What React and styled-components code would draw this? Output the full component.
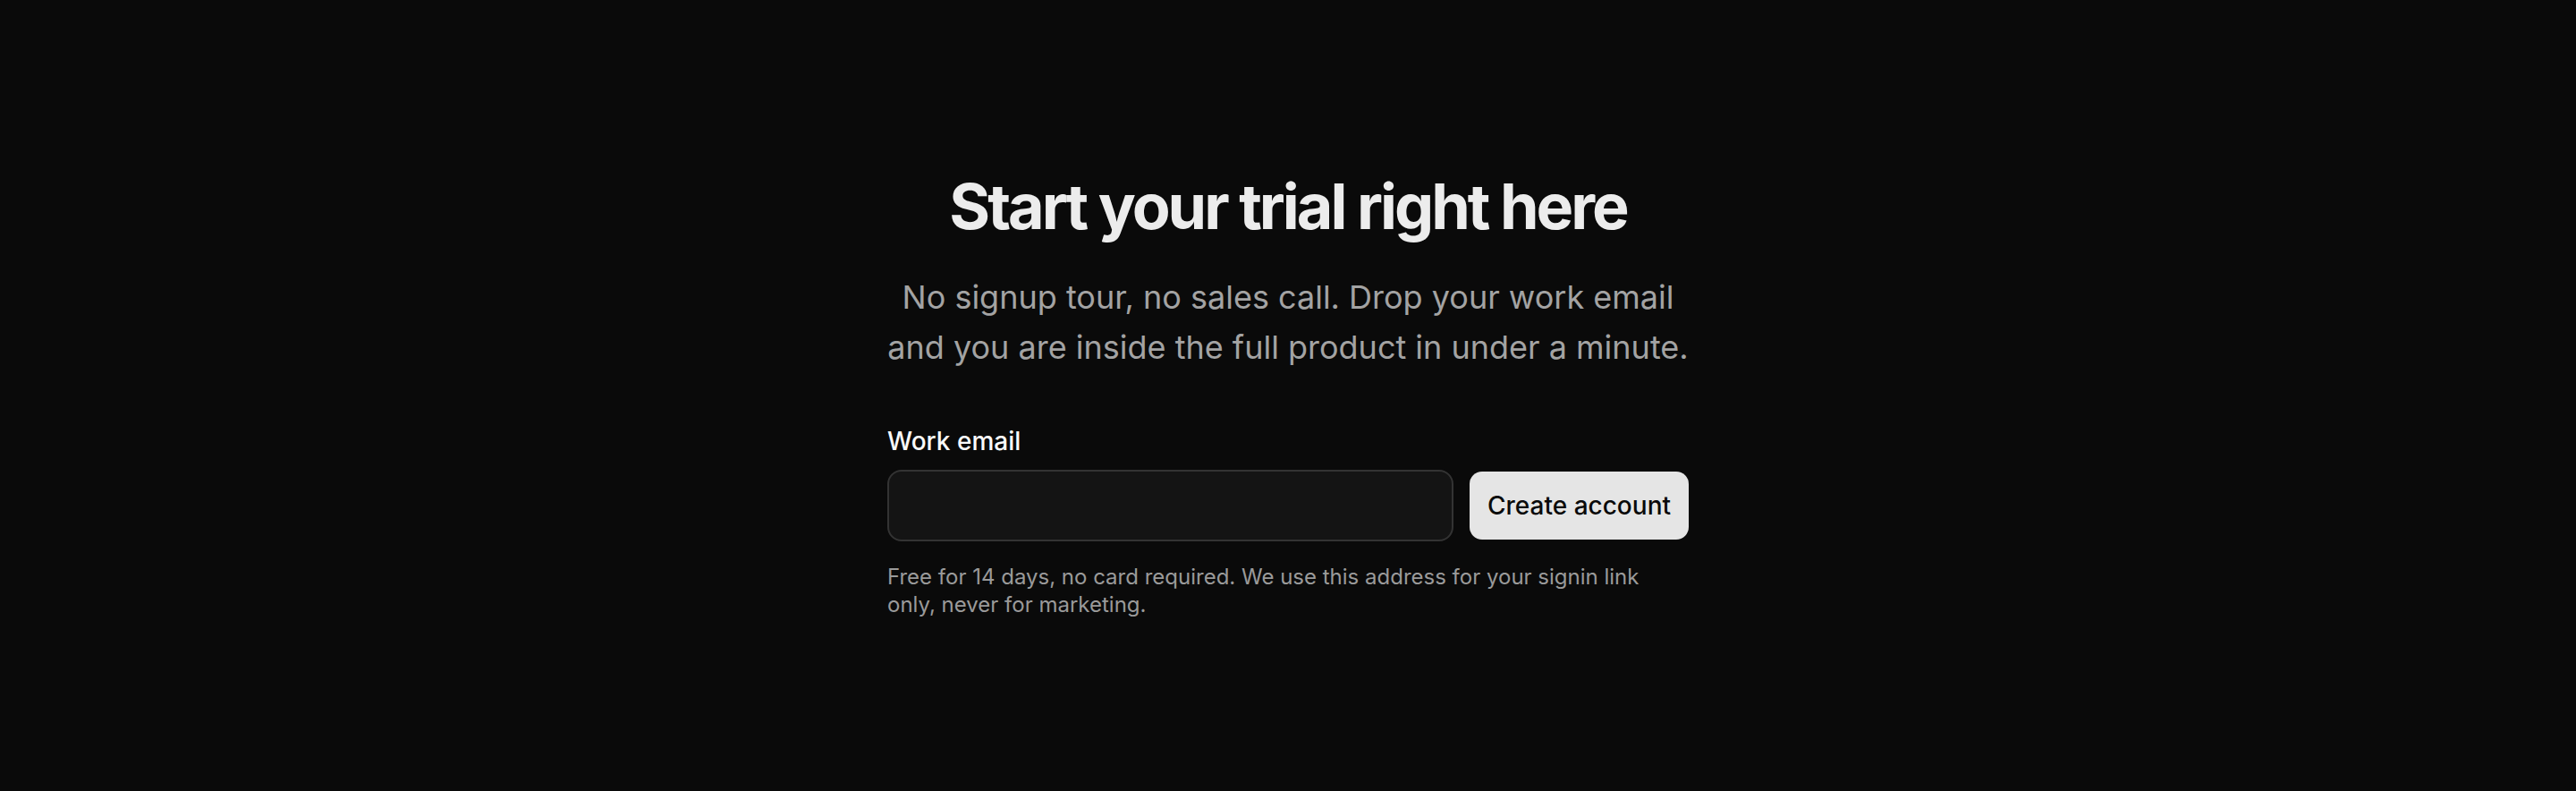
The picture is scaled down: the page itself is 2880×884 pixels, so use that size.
import styled, { createGlobalStyle } from 'styled-components';

const GlobalStyle = createGlobalStyle`
  html, body {
    margin: 0;
    padding: 0;
    background: #0a0a0a;
  }
  body {
    font-family: Inter, "Noto Sans", "Liberation Sans", sans-serif;
  }
  * {
    box-sizing: border-box;
  }
`;

const Page = styled.main`
  min-height: 100vh;
  display: flex;
  align-items: center;
  justify-content: center;
  background: #0a0a0a;
`;

const Column = styled.section`
  width: 896px;
  display: flex;
  flex-direction: column;
`;

const Title = styled.h1`
  margin: 0;
  font-size: 70px;
  line-height: 1.1;
  font-weight: 700;
  letter-spacing: -0.043em;
  color: #ececec;
  text-align: center;
`;

const Lead = styled.p`
  margin: 35px 0 0;
  font-size: 36px;
  line-height: 56px;
  color: #a3a3a3;
  text-align: center;
`;

const Form = styled.form`
  margin-top: 58px;
  display: flex;
  flex-direction: column;
`;

const Label = styled.label`
  font-size: 28px;
  line-height: 1.4;
  font-weight: 500;
  color: #fafafa;
`;

const Row = styled.div`
  margin-top: 11px;
  display: flex;
  align-items: center;
  gap: 18px;
`;

const Input = styled.input`
  flex: 1;
  height: 80px;
  padding: 0 22px;
  border: 2px solid #333333;
  border-radius: 16px;
  background: #141414;
  color: #fafafa;
  font: inherit;
  font-size: 28px;
  outline: none;
`;

const Button = styled.button`
  height: 76px;
  padding: 0 20px;
  border: none;
  border-radius: 14px;
  background: #e5e5e5;
  color: #0a0a0a;
  font-family: inherit;
  font-size: 28px;
  font-weight: 500;
  cursor: pointer;
`;

const Hint = styled.p`
  margin: 24px 0 0;
  font-size: 24px;
  line-height: 31.5px;
  color: #9a9a9a;
`;

const App = () => {
  return (
    <>
      <GlobalStyle />
      <Page>
        <Column>
          <Title>Start your trial right here</Title>
          <Lead>
            No signup tour, no sales call. Drop your work email and you are inside the full product in under a minute.
          </Lead>
          <Form onSubmit={e => e.preventDefault()}>
            <Label htmlFor="email">Work email</Label>
            <Row>
              <Input id="email" type="email" />
              <Button type="submit">Create account</Button>
            </Row>
            <Hint>
              Free for 14 days, no card required. We use this address for your signin link only, never for marketing.
            </Hint>
          </Form>
        </Column>
      </Page>
    </>
  );
};

export default App;
